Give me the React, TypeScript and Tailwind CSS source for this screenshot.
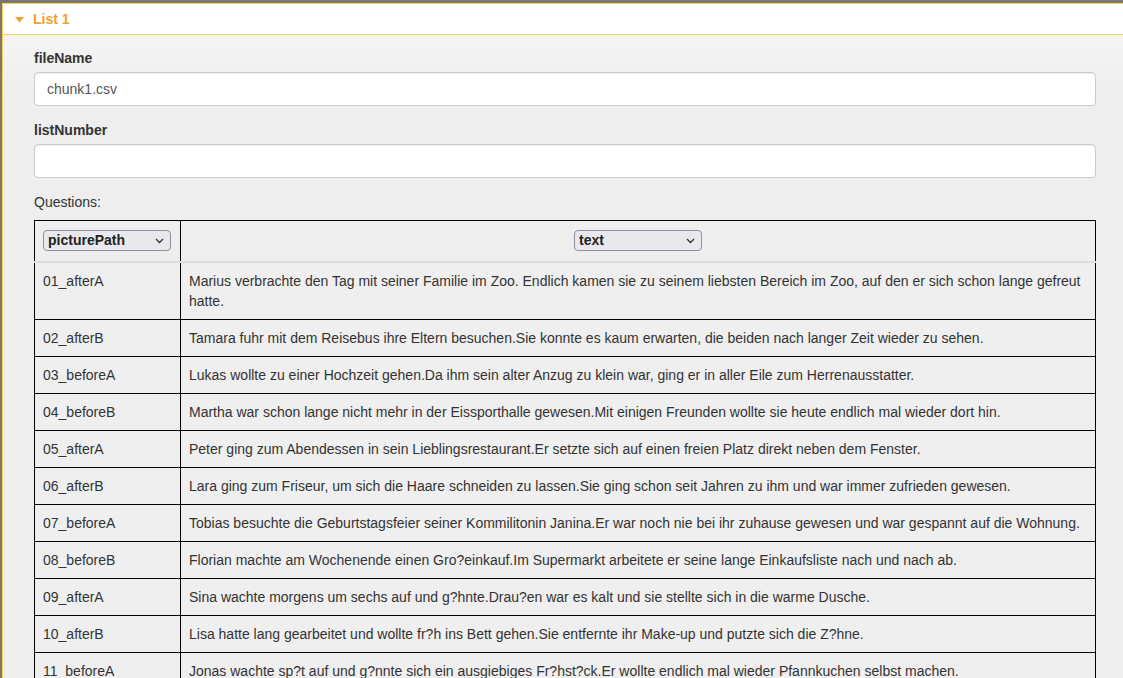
// Collapsible "List 1" panel with file fields and a questions table.
const rows: [string, string][] = [
  ['01_afterA', 'Marius verbrachte den Tag mit seiner Familie im Zoo. Endlich kamen sie zu seinem liebsten Bereich im Zoo, auf den er sich schon lange gefreut hatte.'],
  ['02_afterB', 'Tamara fuhr mit dem Reisebus ihre Eltern besuchen.Sie konnte es kaum erwarten, die beiden nach langer Zeit wieder zu sehen.'],
  ['03_beforeA', 'Lukas wollte zu einer Hochzeit gehen.Da ihm sein alter Anzug zu klein war, ging er in aller Eile zum Herrenausstatter.'],
  ['04_beforeB', 'Martha war schon lange nicht mehr in der Eissporthalle gewesen.Mit einigen Freunden wollte sie heute endlich mal wieder dort hin.'],
  ['05_afterA', 'Peter ging zum Abendessen in sein Lieblingsrestaurant.Er setzte sich auf einen freien Platz direkt neben dem Fenster.'],
  ['06_afterB', 'Lara ging zum Friseur, um sich die Haare schneiden zu lassen.Sie ging schon seit Jahren zu ihm und war immer zufrieden gewesen.'],
  ['07_beforeA', 'Tobias besuchte die Geburtstagsfeier seiner Kommilitonin Janina.Er war noch nie bei ihr zuhause gewesen und war gespannt auf die Wohnung.'],
  ['08_beforeB', 'Florian machte am Wochenende einen Gro?einkauf.Im Supermarkt arbeitete er seine lange Einkaufsliste nach und nach ab.'],
  ['09_afterA', 'Sina wachte morgens um sechs auf und g?hnte.Drau?en war es kalt und sie stellte sich in die warme Dusche.'],
  ['10_afterB', 'Lisa hatte lang gearbeitet und wollte fr?h ins Bett gehen.Sie entfernte ihr Make-up und putzte sich die Z?hne.'],
  ['11_beforeA', 'Jonas wachte sp?t auf und g?nnte sich ein ausgiebiges Fr?hst?ck.Er wollte endlich mal wieder Pfannkuchen selbst machen.'],
  ['12_beforeB', 'Anna ging nach der Arbeit noch schnell einkaufen.Sie brauchte dringend neue Schuhe f?r den Sommer.'],
];

function Field({ label, value }: { label: string; value: string }) {
  return (
    <div className="mb-[14px]">
      <label className="mb-[4px] block text-[14px] leading-[20px] font-bold text-[#333]">{label}</label>
      <input
        readOnly
        value={value}
        className="block h-[34px] w-full rounded-[4px] border border-[#ccc] bg-white px-[12px] text-[14px] text-[#555] shadow-[inset_0_1px_1px_rgba(0,0,0,0.075)] outline-none"
      />
    </div>
  );
}

function ColumnSelect({ value }: { value: string }) {
  return (
    <div className="relative inline-block h-[21px] w-[128px] align-top">
      <select
        defaultValue={value}
        className="block h-[21px] w-[128px] appearance-none rounded-[4px] border border-[#8f8f9d] bg-[#e9e9ed] pl-[4px] text-left text-[14px] leading-[19px] font-bold text-[#222] outline-none"
      >
        <option>{value}</option>
      </select>
      <svg
        width="9"
        height="6"
        viewBox="0 0 9 6"
        className="pointer-events-none absolute top-[8px] right-[7px]"
      >
        <path d="M1 1l3.5 3.5L8 1" fill="none" stroke="#333" strokeWidth="1.3" />
      </svg>
    </div>
  );
}

export default function App() {
  return (
    <div
      className="h-[678px] overflow-hidden bg-[#777] pt-[3px] pl-[2px] text-[14px] text-[#333]"
      style={{ fontFamily: '"Liberation Sans", Arial, sans-serif' }}
    >
      <div className="h-full border-l border-t border-[#ffd54f] bg-[linear-gradient(#f8f8f8,#eeeeee_90px)]">
        <div className="flex h-[31px] items-center gap-[9px] border-b border-[#ffd54f] bg-white pl-[12px]">
          <svg width="9" height="6" viewBox="0 0 9 6" className="mt-[1px]">
            <path d="M0 0h9L4.5 5.5z" fill="#f0a030" />
          </svg>
          <span className="text-[14px] font-bold text-[#f0a030]">List 1</span>
        </div>

        <div className="pt-[13px] pr-[27px] pl-[31px]">
          <Field label="fileName" value="chunk1.csv" />
          <Field label="listNumber" value="" />

          <div className="mb-[8px] leading-[20px]">Questions:</div>

          <table className="w-full border-collapse border border-black">
            <thead>
              <tr className="border-b-2 border-[#ddd]">
                <th className="w-[146px] border-r border-black px-[8px] pt-[9px] pb-[10px] text-left">
                  <ColumnSelect value="picturePath" />
                </th>
                <th className="px-[8px] pt-[9px] pb-[10px] text-center">
                  <ColumnSelect value="text" />
                </th>
              </tr>
            </thead>
            <tbody>
              {rows.map(([p, t]) => (
                <tr key={p} className="border-b border-black bg-[#efefef]">
                  <td className="border-r border-black p-[8px] align-top leading-[20px]">{p}</td>
                  <td className="p-[8px] align-top leading-[20px]">{t}</td>
                </tr>
              ))}
            </tbody>
          </table>
        </div>
      </div>
    </div>
  );
}
